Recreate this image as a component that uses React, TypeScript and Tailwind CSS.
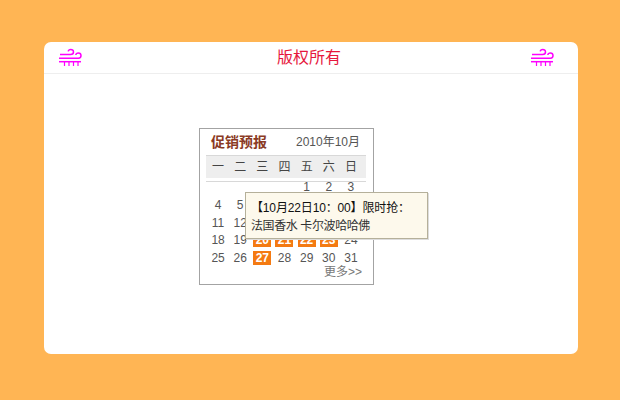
import React from 'react';

const font = { fontFamily: '"Liberation Sans", "Noto Sans CJK SC", sans-serif' };

const WindIcon: React.FC = () => (
    <svg width="24" height="20" viewBox="0 0 24 20" fill="none" stroke="#f0f" strokeWidth="1.5" className="block">
        <path d="M2 6.5H12.5C14.5 6.5 15.5 5.3 15.5 4C15.5 2.5 14.3 1.4 12.8 1.4C11.4 1.4 10.4 2.2 10.2 3.4" />
        <path d="M1 10.2H20.5C22 10.2 23 9 23 7.6C23 6 21.8 5 20.3 5C19 5 18 5.8 17.8 7" />
        <path d="M1 13.7H23" />
        <path d="M6.5 14V18M11 14V18M15.5 14V18M20 14V18" strokeWidth="1.2" />
    </svg>
);

const weekDays = ['一', '二', '三', '四', '五', '六', '日'];
const days: (number | null)[] = [
    null, null, null, null, 1, 2, 3,
    4, 5, 6, 7, 8, 9, 10,
    11, 12, 13, 14, 15, 16, 17,
    18, 19, 20, 21, 22, 23, 24,
    25, 26, 27, 28, 29, 30, 31,
];
const promoDays = [20, 21, 22, 23, 27];

const Calendar: React.FC = () => (
    <div className="relative w-[175px] h-[157px] border border-[#a3a3a3] bg-white px-[6px]">
        <div className="flex items-center justify-between h-[26px] pl-[5px] pr-[7px]">
            <span className="text-[14px] font-bold text-[#8a3a24]">促销预报</span>
            <span className="text-[12px] text-[#555]">2010年10月</span>
        </div>
        <div className="w-[160px] h-[27px] border-t border-b border-[#d8d8d8] bg-[linear-gradient(#eeeeee_0,#eeeeee_22px,#ffffff_22px)] pb-[4px]">
            <div className="grid grid-cols-7 w-[155px] ml-[1px] h-full items-center text-[12px] text-[#444] text-center">
                {weekDays.map(d => <span key={d}>{d}</span>)}
            </div>
        </div>
        <div className="grid grid-cols-7 w-[155px] ml-[1px] -mt-[3px] auto-rows-[17.8px] text-[12px] text-[#555] text-center leading-[14px]">
            {days.map((d, i) => (
                <div key={i} className="flex items-start justify-center pt-[1px]">
                    {d !== null && (
                        <span className={promoDays.includes(d)
                            ? 'w-[18px] h-[14px] bg-[#f47a12] text-white font-bold'
                            : ''}>{d}</span>
                    )}
                </div>
            ))}
        </div>
        <div className="absolute right-[11px] bottom-[5px] text-[12px] leading-[14px] text-[#777]">更多&gt;&gt;</div>
        <div className="absolute left-[45px] top-[63px] w-[183px] h-[47px] border border-[#b5b09a] bg-[#fdf9ec] pl-[5px] pt-[6px] text-[12px] leading-[18px] text-[#333] whitespace-nowrap shadow-[1px_1px_0_#ddd]">
            <div className="text-[#111] tracking-[-0.15px]">【10月22日10：00】限时抢：</div>
            <div className="tracking-[-0.4px]">法国香水 卡尔波哈哈佛</div>
        </div>
    </div>
);

export default function App() {
    return (
        <div className="w-[620px] h-[400px] bg-[#ffb554] pt-[42px] pl-[44px]" style={font}>
            <div className="w-[534px] h-[312px] bg-white rounded-[7px] flex flex-col">
                <header className="h-[32px] flex-shrink-0 flex items-center justify-between pl-[14px] pr-[24px] border-b border-[#eeeeee]">
                    <WindIcon />
                    <span className="ml-[6px] text-[16px] text-[#e6173c]">版权所有</span>
                    <WindIcon />
                </header>
                <main className="flex-1 pt-[54px] pl-[155px]">
                    <Calendar />
                </main>
            </div>
        </div>
    );
}
